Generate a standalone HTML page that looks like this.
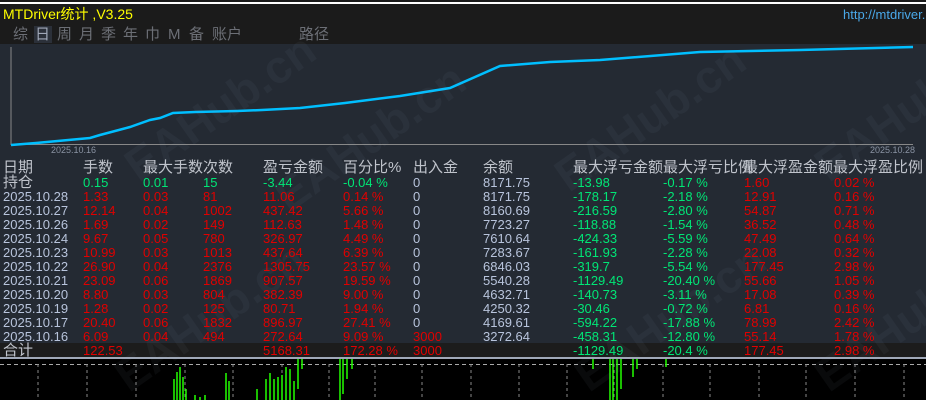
<!DOCTYPE html>
<html><head><meta charset="utf-8"><style>
*{margin:0;padding:0;box-sizing:border-box}
html{width:926px;height:400px;overflow:hidden}
body{width:926px;height:400px;overflow:hidden;background:#000;position:relative;font-family:"Liberation Sans","Noto Sans CJK SC",sans-serif}
.a{position:absolute;white-space:nowrap}
.hd{font-size:15px;color:#c0c4cc;line-height:16px}
.r{font-size:13px;line-height:14px}
.w{color:#b8c4dc}.R{color:#e00000}.G{color:#00e676}
.tab{position:absolute;top:26px;font-size:15px;color:#6c6f76;line-height:17px}
.wm{position:absolute;font-size:46px;font-weight:bold;color:rgba(160,170,190,0.06);transform:rotate(-35deg);white-space:nowrap}
</style></head><body>
<div class="a" style="left:0;top:0;width:926px;height:44px;background:#1b1b1b"></div>
<div class="a" style="left:0;top:2px;width:926px;height:2px;background:#fff"></div>
<div class="a" style="left:3px;top:6px;font-size:14px;color:#ffff00;line-height:16px">MTDriver统计 ,V3.25</div>
<div class="a" style="left:843px;top:7px;font-size:13px;color:#4aa8e8;line-height:15px">http://mtdriver.</div>
<div class="a" style="left:34px;top:26px;width:18px;height:17px;background:#2b3039"></div>
<div class="tab" style="left:13px">综</div><div class="tab" style="left:35px;color:#a0a8b8">日</div><div class="tab" style="left:57px">周</div><div class="tab" style="left:79px">月</div><div class="tab" style="left:101px">季</div><div class="tab" style="left:123px">年</div><div class="tab" style="left:145px">巾</div><div class="tab" style="left:168px">M</div><div class="tab" style="left:189px">备</div><div class="tab" style="left:212px">账户</div><div class="tab" style="left:299px">路径</div>
<div class="a" style="left:0;top:44px;width:926px;height:313px;background:#242a33"></div>
<svg class="a" style="left:0;top:44px" width="926" height="115">
<line x1="11" y1="3" x2="11" y2="101" stroke="#888" stroke-width="1"/>
<line x1="11" y1="100.5" x2="913" y2="100.5" stroke="#888" stroke-width="1"/>
<polyline fill="none" stroke="#00bfff" stroke-width="2.5" points="11,101 36,99 90,94 100,91 130,83 150,76 160,74 173,69 195,68 237,67 262,66 300,64 345,59 400,52 450,44 500,22 550,18 600,16 700,8 800,6 913,3"/>
</svg>
<div class="a" style="left:51px;top:145px;font-size:9px;color:#8a93a3">2025.10.16</div>
<div class="a" style="left:870px;top:145px;font-size:9px;color:#8a93a3">2025.10.28</div>
<div class="a" style="left:0;top:343px;width:926px;height:14px;background:#1c1c1c"></div>
<div class="a" style="left:0;top:357px;width:926px;height:2px;background:#a0a8b8"></div>
<svg class="a" style="left:0;top:359px" width="926" height="41">
<line x1="0" y1="5.5" x2="926" y2="5.5" stroke="#aaa" stroke-dasharray="4,3"/>
<g stroke="#888" stroke-dasharray="3,3">
<line x1="38" y1="5" x2="38" y2="41"/><line x1="87" y1="5" x2="87" y2="41"/><line x1="136" y1="5" x2="136" y2="41"/><line x1="185" y1="5" x2="185" y2="41"/><line x1="233" y1="5" x2="233" y2="41"/><line x1="282" y1="5" x2="282" y2="41"/><line x1="329" y1="5" x2="329" y2="41"/><line x1="375" y1="5" x2="375" y2="41"/><line x1="422" y1="5" x2="422" y2="41"/><line x1="471" y1="5" x2="471" y2="41"/><line x1="519" y1="5" x2="519" y2="41"/><line x1="567" y1="5" x2="567" y2="41"/><line x1="614" y1="5" x2="614" y2="41"/><line x1="663" y1="5" x2="663" y2="41"/><line x1="710" y1="5" x2="710" y2="41"/><line x1="759" y1="5" x2="759" y2="41"/><line x1="806" y1="5" x2="806" y2="41"/><line x1="855" y1="5" x2="855" y2="41"/><line x1="904" y1="5" x2="904" y2="41"/></g>
<g stroke="#22ff00" stroke-width="1.5">
<line x1="174" y1="20" x2="174" y2="41"/><line x1="177" y1="13" x2="177" y2="41"/><line x1="180" y1="8" x2="180" y2="41"/><line x1="183" y1="18" x2="183" y2="41"/><line x1="186" y1="30" x2="186" y2="41"/><line x1="195" y1="36" x2="195" y2="41"/><line x1="200" y1="38" x2="200" y2="41"/><line x1="205" y1="36" x2="205" y2="41"/><line x1="226" y1="14" x2="226" y2="41"/><line x1="229" y1="22" x2="229" y2="41"/><line x1="257" y1="30" x2="257" y2="41"/><line x1="266" y1="20" x2="266" y2="41"/><line x1="270" y1="14" x2="270" y2="41"/><line x1="274" y1="20" x2="274" y2="41"/><line x1="278" y1="18" x2="278" y2="41"/><line x1="282" y1="16" x2="282" y2="41"/><line x1="286" y1="8" x2="286" y2="41"/><line x1="290" y1="10" x2="290" y2="41"/><line x1="294" y1="22" x2="294" y2="41"/><line x1="298" y1="0" x2="298" y2="30"/><line x1="302" y1="0" x2="302" y2="10"/><line x1="340" y1="0" x2="340" y2="41"/><line x1="343" y1="0" x2="343" y2="35"/><line x1="347" y1="0" x2="347" y2="20"/><line x1="352" y1="0" x2="352" y2="10"/><line x1="593" y1="0" x2="593" y2="10"/><line x1="610" y1="0" x2="610" y2="41"/><line x1="613" y1="0" x2="613" y2="41"/><line x1="617" y1="0" x2="617" y2="41"/><line x1="621" y1="0" x2="621" y2="30"/><line x1="633" y1="0" x2="633" y2="18"/><line x1="637" y1="0" x2="637" y2="10"/><line x1="666" y1="0" x2="666" y2="8"/></g>
</svg>
<div class="wm" style="left:110px;top:80px">EAHub.cn</div>
<div class="wm" style="left:260px;top:110px">EAHub.cn</div>
<div class="wm" style="left:540px;top:90px">EAHub.cn</div>
<div class="wm" style="left:800px;top:80px">EAHub.cn</div>
<div class="wm" style="left:100px;top:290px">EAHub.cn</div>
<div class="wm" style="left:560px;top:290px">EAHub.cn</div>
<div class="wm" style="left:800px;top:290px">EAHub.cn</div>

<div class="a hd" style="left:3px;top:160px">日期</div>
<div class="a hd" style="left:83px;top:160px">手数</div>
<div class="a hd" style="left:143px;top:160px">最大手数次数</div>
<div class="a hd" style="left:263px;top:160px">盈亏金额</div>
<div class="a hd" style="left:343px;top:160px">百分比%</div>
<div class="a hd" style="left:413px;top:160px">出入金</div>
<div class="a hd" style="left:483px;top:160px">余额</div>
<div class="a hd" style="left:573px;top:160px">最大浮亏金额</div>
<div class="a hd" style="left:663px;top:160px">最大浮亏比例</div>
<div class="a hd" style="left:743px;top:160px">最大浮盈金额</div>
<div class="a hd" style="left:833px;top:160px">最大浮盈比例</div>

<div class="a hd" style="left:3px;top:175px">持仓</div>
<div class="a r G" style="left:83px;top:176px">0.15</div><div class="a r G" style="left:143px;top:176px">0.01</div><div class="a r G" style="left:203px;top:176px">15</div><div class="a r G" style="left:263px;top:176px">-3.44</div><div class="a r G" style="left:343px;top:176px">-0.04 %</div><div class="a r w" style="left:413px;top:176px">0</div><div class="a r w" style="left:483px;top:176px">8171.75</div><div class="a r G" style="left:573px;top:176px">-13.98</div><div class="a r G" style="left:663px;top:176px">-0.17 %</div><div class="a r R" style="left:744px;top:176px">1.60</div><div class="a r R" style="left:834px;top:176px">0.02 %</div>

<div class="a r w" style="left:3px;top:190px">2025.10.28</div><div class="a r R" style="left:83px;top:190px">1.33</div><div class="a r R" style="left:143px;top:190px">0.03</div><div class="a r R" style="left:203px;top:190px">81</div><div class="a r R" style="left:263px;top:190px">11.06</div><div class="a r R" style="left:343px;top:190px">0.14 %</div><div class="a r w" style="left:413px;top:190px">0</div><div class="a r w" style="left:483px;top:190px">8171.75</div><div class="a r G" style="left:573px;top:190px">-178.17</div><div class="a r G" style="left:663px;top:190px">-2.18 %</div><div class="a r R" style="left:744px;top:190px">12.91</div><div class="a r R" style="left:834px;top:190px">0.16 %</div>

<div class="a r w" style="left:3px;top:204px">2025.10.27</div><div class="a r R" style="left:83px;top:204px">12.14</div><div class="a r R" style="left:143px;top:204px">0.04</div><div class="a r R" style="left:203px;top:204px">1002</div><div class="a r R" style="left:263px;top:204px">437.42</div><div class="a r R" style="left:343px;top:204px">5.66 %</div><div class="a r w" style="left:413px;top:204px">0</div><div class="a r w" style="left:483px;top:204px">8160.69</div><div class="a r G" style="left:573px;top:204px">-216.59</div><div class="a r G" style="left:663px;top:204px">-2.80 %</div><div class="a r R" style="left:744px;top:204px">54.87</div><div class="a r R" style="left:834px;top:204px">0.71 %</div>

<div class="a r w" style="left:3px;top:218px">2025.10.26</div><div class="a r R" style="left:83px;top:218px">1.69</div><div class="a r R" style="left:143px;top:218px">0.02</div><div class="a r R" style="left:203px;top:218px">149</div><div class="a r R" style="left:263px;top:218px">112.63</div><div class="a r R" style="left:343px;top:218px">1.48 %</div><div class="a r w" style="left:413px;top:218px">0</div><div class="a r w" style="left:483px;top:218px">7723.27</div><div class="a r G" style="left:573px;top:218px">-118.88</div><div class="a r G" style="left:663px;top:218px">-1.54 %</div><div class="a r R" style="left:744px;top:218px">36.52</div><div class="a r R" style="left:834px;top:218px">0.48 %</div>

<div class="a r w" style="left:3px;top:232px">2025.10.24</div><div class="a r R" style="left:83px;top:232px">9.67</div><div class="a r R" style="left:143px;top:232px">0.05</div><div class="a r R" style="left:203px;top:232px">780</div><div class="a r R" style="left:263px;top:232px">326.97</div><div class="a r R" style="left:343px;top:232px">4.49 %</div><div class="a r w" style="left:413px;top:232px">0</div><div class="a r w" style="left:483px;top:232px">7610.64</div><div class="a r G" style="left:573px;top:232px">-424.33</div><div class="a r G" style="left:663px;top:232px">-5.59 %</div><div class="a r R" style="left:744px;top:232px">47.49</div><div class="a r R" style="left:834px;top:232px">0.64 %</div>

<div class="a r w" style="left:3px;top:246px">2025.10.23</div><div class="a r R" style="left:83px;top:246px">10.99</div><div class="a r R" style="left:143px;top:246px">0.03</div><div class="a r R" style="left:203px;top:246px">1013</div><div class="a r R" style="left:263px;top:246px">437.64</div><div class="a r R" style="left:343px;top:246px">6.39 %</div><div class="a r w" style="left:413px;top:246px">0</div><div class="a r w" style="left:483px;top:246px">7283.67</div><div class="a r G" style="left:573px;top:246px">-161.93</div><div class="a r G" style="left:663px;top:246px">-2.28 %</div><div class="a r R" style="left:744px;top:246px">22.08</div><div class="a r R" style="left:834px;top:246px">0.32 %</div>

<div class="a r w" style="left:3px;top:260px">2025.10.22</div><div class="a r R" style="left:83px;top:260px">26.90</div><div class="a r R" style="left:143px;top:260px">0.04</div><div class="a r R" style="left:203px;top:260px">2376</div><div class="a r R" style="left:263px;top:260px">1305.75</div><div class="a r R" style="left:343px;top:260px">23.57 %</div><div class="a r w" style="left:413px;top:260px">0</div><div class="a r w" style="left:483px;top:260px">6846.03</div><div class="a r G" style="left:573px;top:260px">-319.7</div><div class="a r G" style="left:663px;top:260px">-5.54 %</div><div class="a r R" style="left:744px;top:260px">177.45</div><div class="a r R" style="left:834px;top:260px">2.98 %</div>

<div class="a r w" style="left:3px;top:274px">2025.10.21</div><div class="a r R" style="left:83px;top:274px">23.09</div><div class="a r R" style="left:143px;top:274px">0.06</div><div class="a r R" style="left:203px;top:274px">1869</div><div class="a r R" style="left:263px;top:274px">907.57</div><div class="a r R" style="left:343px;top:274px">19.59 %</div><div class="a r w" style="left:413px;top:274px">0</div><div class="a r w" style="left:483px;top:274px">5540.28</div><div class="a r G" style="left:573px;top:274px">-1129.49</div><div class="a r G" style="left:663px;top:274px">-20.40 %</div><div class="a r R" style="left:744px;top:274px">55.66</div><div class="a r R" style="left:834px;top:274px">1.05 %</div>

<div class="a r w" style="left:3px;top:288px">2025.10.20</div><div class="a r R" style="left:83px;top:288px">8.80</div><div class="a r R" style="left:143px;top:288px">0.03</div><div class="a r R" style="left:203px;top:288px">804</div><div class="a r R" style="left:263px;top:288px">382.39</div><div class="a r R" style="left:343px;top:288px">9.00 %</div><div class="a r w" style="left:413px;top:288px">0</div><div class="a r w" style="left:483px;top:288px">4632.71</div><div class="a r G" style="left:573px;top:288px">-140.73</div><div class="a r G" style="left:663px;top:288px">-3.11 %</div><div class="a r R" style="left:744px;top:288px">17.08</div><div class="a r R" style="left:834px;top:288px">0.39 %</div>

<div class="a r w" style="left:3px;top:302px">2025.10.19</div><div class="a r R" style="left:83px;top:302px">1.28</div><div class="a r R" style="left:143px;top:302px">0.02</div><div class="a r R" style="left:203px;top:302px">125</div><div class="a r R" style="left:263px;top:302px">80.71</div><div class="a r R" style="left:343px;top:302px">1.94 %</div><div class="a r w" style="left:413px;top:302px">0</div><div class="a r w" style="left:483px;top:302px">4250.32</div><div class="a r G" style="left:573px;top:302px">-30.46</div><div class="a r G" style="left:663px;top:302px">-0.72 %</div><div class="a r R" style="left:744px;top:302px">6.81</div><div class="a r R" style="left:834px;top:302px">0.16 %</div>

<div class="a r w" style="left:3px;top:316px">2025.10.17</div><div class="a r R" style="left:83px;top:316px">20.40</div><div class="a r R" style="left:143px;top:316px">0.06</div><div class="a r R" style="left:203px;top:316px">1832</div><div class="a r R" style="left:263px;top:316px">896.97</div><div class="a r R" style="left:343px;top:316px">27.41 %</div><div class="a r w" style="left:413px;top:316px">0</div><div class="a r w" style="left:483px;top:316px">4169.61</div><div class="a r G" style="left:573px;top:316px">-594.22</div><div class="a r G" style="left:663px;top:316px">-17.88 %</div><div class="a r R" style="left:744px;top:316px">78.99</div><div class="a r R" style="left:834px;top:316px">2.42 %</div>

<div class="a r w" style="left:3px;top:330px">2025.10.16</div><div class="a r R" style="left:83px;top:330px">6.09</div><div class="a r R" style="left:143px;top:330px">0.04</div><div class="a r R" style="left:203px;top:330px">494</div><div class="a r R" style="left:263px;top:330px">272.64</div><div class="a r R" style="left:343px;top:330px">9.09 %</div><div class="a r R" style="left:413px;top:330px">3000</div><div class="a r w" style="left:483px;top:330px">3272.64</div><div class="a r G" style="left:573px;top:330px">-458.31</div><div class="a r G" style="left:663px;top:330px">-12.80 %</div><div class="a r R" style="left:744px;top:330px">55.14</div><div class="a r R" style="left:834px;top:330px">1.78 %</div>

<div class="a hd" style="left:3px;top:343px">合计</div><div class="a r R" style="left:83px;top:344px">122.53</div><div class="a r R" style="left:263px;top:344px">5168.31</div><div class="a r R" style="left:343px;top:344px">172.28 %</div><div class="a r R" style="left:413px;top:344px">3000</div><div class="a r G" style="left:573px;top:344px">-1129.49</div><div class="a r G" style="left:663px;top:344px">-20.4 %</div><div class="a r R" style="left:744px;top:344px">177.45</div><div class="a r R" style="left:834px;top:344px">2.98 %</div>
</body></html>
